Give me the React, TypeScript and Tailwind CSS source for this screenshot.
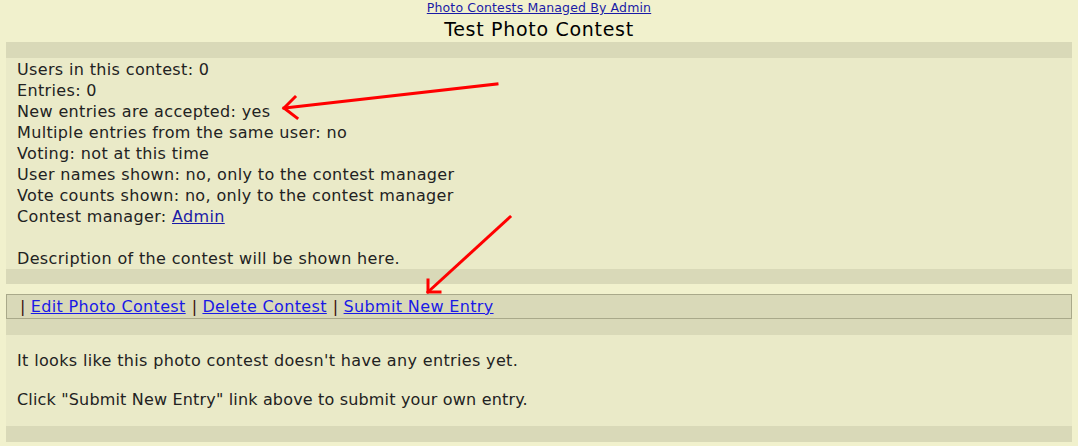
const infoLines = [
  'Users in this contest: 0',
  'Entries: 0',
  'New entries are accepted: yes',
  'Multiple entries from the same user: no',
  'Voting: not at this time',
  'User names shown: no, only to the contest manager',
  'Vote counts shown: no, only to the contest manager',
];

function Arrows() {
  return (
    <svg className="pointer-events-none absolute left-0 top-0" width="1078" height="446">
      <g stroke="#ff0000" strokeWidth="3" fill="none" strokeLinecap="square">
        <path d="M497 84 L284 108" />
        <path d="M295 97 L284 108 L297 118" />
        <path d="M510 217 L428 292" />
        <path d="M428 280 L428 292 L440 292" />
      </g>
    </svg>
  );
}

export default function App() {
  return (
    <div className="relative h-[446px] w-[1078px] overflow-hidden bg-[#f1f1cd] font-['DejaVu_Sans',sans-serif] text-[#222]">
      <div className="text-center">
        <div className="text-[12.5px] leading-[16px] tracking-[0.15px]">
          <a href="#" className="text-[#1a1aa6] underline">
            Photo Contests Managed By Admin
          </a>
        </div>
        <h1 className="text-[19px] leading-[26px] tracking-[0.7px] text-black">Test Photo Contest</h1>
      </div>

      <div className="px-[6px] tracking-[0.35px]">
        <div className="h-[16px] bg-[#d9d9b8]" />
        <div className="bg-[#eaeac8] px-[11px] pt-[1px] text-[16px] leading-[21px]">
          {infoLines.map((line) => (
            <div key={line}>{line}</div>
          ))}
          <div>
            Contest manager:{' '}
            <a href="#" className="text-[#1a1aa6] underline">
              Admin
            </a>
          </div>
          <div className="h-[21px]" />
          <div>Description of the contest will be shown here.</div>
        </div>
        <div className="h-[15px] bg-[#d9d9b8]" />

        <div className="mt-[10px] flex h-[25px] items-center border border-[#a9a98a] bg-[#d9d9b8] px-[13px] text-[16px]">
          <span className="text-[#3a1010]">|</span>
          <a href="#" className="ml-[5px] text-[#1a1ae6] underline">Edit Photo Contest</a>
          <span className="ml-[6px] text-[#3a1010]">|</span>
          <a href="#" className="ml-[5px] text-[#1a1ae6] underline">Delete Contest</a>
          <span className="ml-[6px] text-[#3a1010]">|</span>
          <a href="#" className="ml-[5px] text-[#1a1ae6] underline">Submit New Entry</a>
        </div>
        <div className="h-[16px] bg-[#d9d9b8]" />

        <div className="flex h-[91px] flex-col gap-[20px] bg-[#eaeac8] px-[11px] pt-[16px] text-[16px] leading-[19px]">
          <p>It looks like this photo contest doesn't have any entries yet.</p>
          <p className="tracking-[0.17px]">Click "Submit New Entry" link above to submit your own entry.</p>
        </div>
        <div className="h-[16px] bg-[#d9d9b8]" />
      </div>

      <Arrows />
    </div>
  );
}
